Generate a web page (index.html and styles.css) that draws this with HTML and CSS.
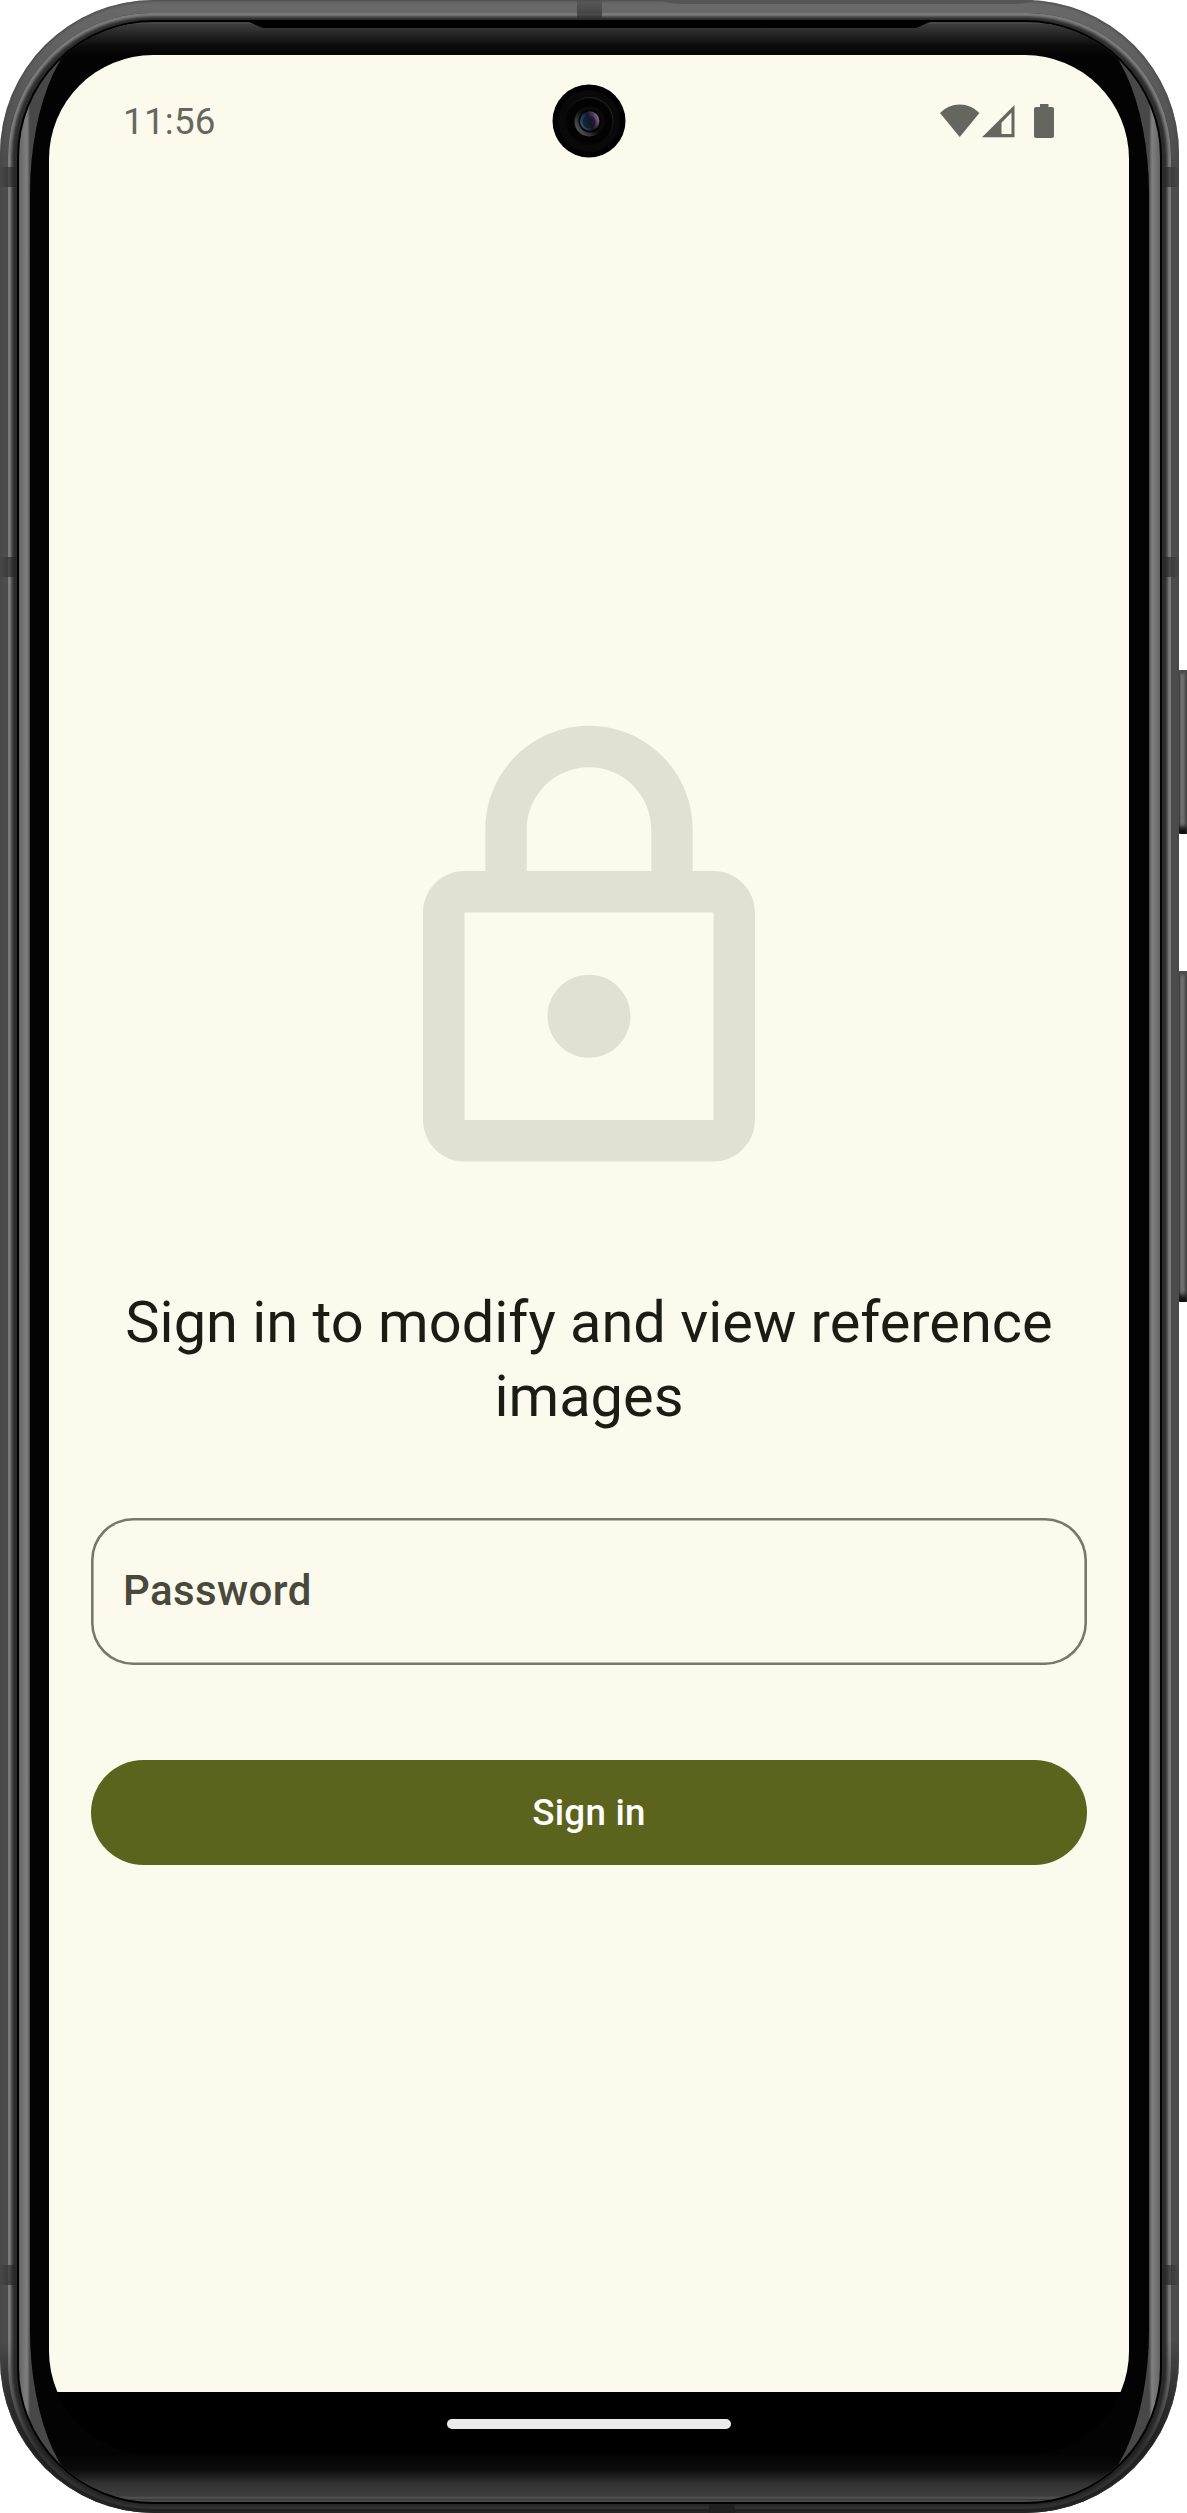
FILE: index.html
```html
<!DOCTYPE html>
<html lang="en">
<head>
<meta charset="utf-8">
<title>Sign in</title>
<link rel="stylesheet" href="styles.css">
</head>
<body>
<div class="device">
  <span class="key key-power"></span>
  <span class="key key-volume"></span>
  <div class="frame">
    <span class="top-inlay"></span>
    <span class="band band-top"></span>
    <span class="band band-bottom"></span>
    <span class="band band-left band-a"></span>
    <span class="band band-left band-b"></span>
    <span class="band band-left band-c"></span>
    <span class="band band-right band-a"></span>
    <span class="band band-right band-b"></span>
    <span class="band band-right band-c"></span>
    <div class="bezel">
      <div class="glass">
        <span class="speaker"></span>
        <div class="screen">
          <header class="status-bar">
            <time class="clock">11:56</time>
            <div class="status-icons">
              <svg class="icon-wifi" width="40" height="34" viewBox="0 0 40 34"><path d="M0 9Q8 .5 19.7 .5T39.4 9L19.7 33z"/></svg>
              <svg class="icon-signal" width="33" height="34" viewBox="0 0 33 34"><path fill-rule="evenodd" d="M32.5 1v32.3H0zM29.5 8.5L19.5 18.7v11.3h10z"/></svg>
              <svg class="icon-battery" width="20" height="34" viewBox="0 0 20 34"><path d="M6 0h8.5v3H18q2 0 2 2v27q0 2-2 2H2q-2 0-2-2V5q0-2 2-2h4z"/></svg>
            </div>
          </header>
          <svg class="camera" width="74" height="74" viewBox="0 0 74 74">
            <defs>
              <linearGradient id="lens" x1="0" y1=".7" x2="1" y2=".3"><stop offset="0" stop-color="#246079"/><stop offset=".5" stop-color="#15172a"/><stop offset=".75" stop-color="#4b3355"/><stop offset="1" stop-color="#a777ad"/></linearGradient>
              <linearGradient id="glint" x1="0" y1=".8" x2=".75" y2=".2"><stop offset="0" stop-color="#606060"/><stop offset=".6" stop-color="#0b0b0b"/></linearGradient>
              <linearGradient id="rim" x1=".8" y1="0" x2=".4" y2=".5"><stop offset="0" stop-color="#303030"/><stop offset="1" stop-color="#060606"/></linearGradient>
            </defs>
            <circle cx="37" cy="37" r="36.5" fill="#000"/>
            <circle cx="37" cy="37" r="31" fill="#090909"/>
            <circle cx="37.5" cy="37" r="23.5" fill="#030303" stroke="url(#rim)"/>
            <circle cx="37.5" cy="37.5" r="15" fill="url(#glint)"/>
            <circle cx="38" cy="37" r="11.5" fill="#050507"/>
            <circle cx="37.7" cy="37" r="9.7" fill="url(#lens)"/>
            <circle cx="37" cy="38" r="6.5" fill="#14182a" opacity=".7"/>
          </svg>
          <main class="content">
            <svg class="lock" width="498" height="498" viewBox="0 0 24 24"><path d="M18 8h-1V6c0-2.76-2.24-5-5-5S7 3.24 7 6v2H6c-1.1 0-2 .9-2 2v10c0 1.1.9 2 2 2h12c1.1 0 2-.9 2-2V10c0-1.1-.9-2-2-2zM9 6c0-1.66 1.34-3 3-3s3 1.34 3 3v2H9V6zm9 14H6V10h12v10zm-6-3c1.1 0 2-.9 2-2s-.9-2-2-2-2 .9-2 2 .9 2 2 2z"/></svg>
            <h1 class="title">Sign in to modify and view reference images</h1>
            <div class="field">Password</div>
            <button class="submit" type="button">Sign in</button>
          </main>
          <footer class="nav-bar"><span class="handle"></span></footer>
        </div>
      </div>
    </div>
  </div>
</div>
</body>
</html>
```

FILE: styles.css
```css
* { box-sizing: border-box; }

body {
  margin: 0;
  background: #fff;
  font-family: Roboto, sans-serif;
}

.device {
  position: relative;
  width: 1187px;
  height: 2513px;
  overflow: hidden;
}

/* Metal frame */
.frame {
  position: relative;
  width: 1179px;
  height: 2513px;
  padding: 20px 17px 9px;
  border-radius: 154px;
  overflow: hidden;
  background: linear-gradient(#6a6a6a, #4c4c4c 160px, #4c4c4c 2340px, #2c2c2c 2440px);
  box-shadow: inset 0 0 3px 1px #484848;
}

.frame::before {
  content: "";
  position: absolute;
  inset: 13px 8px 4px;
  border-radius: 144px;
  background: #2c2c2c;
  box-shadow:
    inset 0 0 2px 3px rgba(134, 134, 134, .85),
    inset 0 0 2px 5px #484848;
}

.frame::after {
  content: "";
  position: absolute;
  inset: 2340px 0 0;
  background: linear-gradient(transparent, rgba(30, 30, 30, .8) 110px);
}

.top-inlay {
  position: absolute;
  z-index: 1;
  top: -4px;
  left: 660px;
  width: 376px;
  height: 8px;
  border-radius: 0 0 24px 24px / 0 0 6px 6px;
  background: #555;
}

.band {
  position: absolute;
  z-index: 1;
  background: linear-gradient(90deg, rgba(70, 70, 70, .5), rgba(38, 38, 38, .85));
}
.band-top { left: 577px; top: 0; width: 25px; height: 20px; background: linear-gradient(rgba(80, 80, 80, .6), rgba(45, 45, 45, .75)); }
.band-bottom { left: 709px; bottom: 0; width: 26px; height: 9px; background: #202020; }
.band-left, .band-right { width: 16px; height: 20px; }
.band-left { left: 0; }
.band-right { right: 0; transform: scaleX(-1); }
.band-a { top: 167px; }
.band-b { top: 557px; }
.band-c { top: 2265px; }

.key {
  position: absolute;
  right: 0;
  width: 9px;
  border-radius: 3px 0 0 3px;
  background: linear-gradient(90deg, #333, #777 3px, #656565);
  box-shadow: inset 0 4px 3px #4c4c4c, inset 0 -7px 4px #101010;
}
.key-power { top: 670px; height: 164px; }
.key-volume { top: 971px; height: 331px; }

/* Polished strip between the frame and the front glass */
.bezel {
  position: relative;
  z-index: 2;
  height: 2484px;
  padding: 2px 10px;
  border: 2px solid #000;
  border-radius: 137px;
  overflow: hidden;
  background: linear-gradient(90deg, #606060, #6c6c6c 2px, #808080 8px, #484848 11px, #484848 1130px, #808080 1133px, #6c6c6c 1139px, #606060);
}

.glass {
  position: relative;
  height: 2476px;
  margin: 0 1px;
  padding: 31px 19px 0;
  border-radius: 79px / 170px;
  background: linear-gradient(#3c3c3c, #262626 10px, #0b0b0b 22px, #030303 32px, #030303 2430px, #0c0c0c 2446px, #333 2460px, #3e3e3e 2472px, #555 2474px, #333);
}

.speaker {
  position: absolute;
  top: -2px;
  left: 219px;
  right: 219px;
  height: 6px;
  background: #000;
  clip-path: polygon(0 0, 100% 0, calc(100% - 14px) 100%, 14px 100%);
}

.screen {
  position: relative;
  display: flex;
  flex-direction: column;
  width: 1080px;
  height: 2400px;
  border-radius: 104px;
  overflow: hidden;
  background: linear-gradient(#fcfaec 2337px, #000 2337px);
}

.status-bar {
  display: flex;
  flex: none;
  align-items: center;
  justify-content: space-between;
  height: 132px;
  padding: 0 75px 0 74px;
  color: #666660;
}
.clock {
  padding-top: 1px;
  font-size: 36.75px;
  line-height: 44px;
  letter-spacing: .25px;
}
.status-icons { display: flex; }
.status-icons svg { display: block; fill: #666660; }
.icon-signal { margin-left: 2px; }
.icon-battery { margin-left: 19px; }

.camera {
  position: absolute;
  top: 29px;
  left: 503px;
}

.content {
  display: flex;
  flex: 1;
  flex-direction: column;
  align-items: center;
  padding: 518px 42px 0;
}
.lock { flex: none; fill: #e2e0d3; }
.title {
  margin: 83px 0 85px;
  color: #1c1c14;
  font-size: 57.75px;
  font-weight: 400;
  line-height: 73.5px;
  text-align: center;
}
.field {
  display: flex;
  align-items: center;
  align-self: stretch;
  height: 147px;
  padding: 0 32px 2px;
  border-radius: 42px;
  box-shadow: inset 0 0 0 2.6px #787869;
  color: #48483b;
  font-size: 42px;
  font-weight: 500;
  letter-spacing: .39px;
}
.submit {
  align-self: stretch;
  height: 105px;
  margin: 94.5px 0 0;
  padding: 0;
  border: 0;
  border-radius: 53px;
  background: #5c631c;
  color: #fff;
  font: 500 36.75px Roboto, sans-serif;
  letter-spacing: .26px;
}

.nav-bar {
  display: flex;
  flex: none;
  justify-content: center;
  height: 63px;
  padding-top: 27px;
  background: #000;
}
.handle {
  width: 284px;
  height: 10px;
  border-radius: 5px;
  background: #ebebeb;
}
```
